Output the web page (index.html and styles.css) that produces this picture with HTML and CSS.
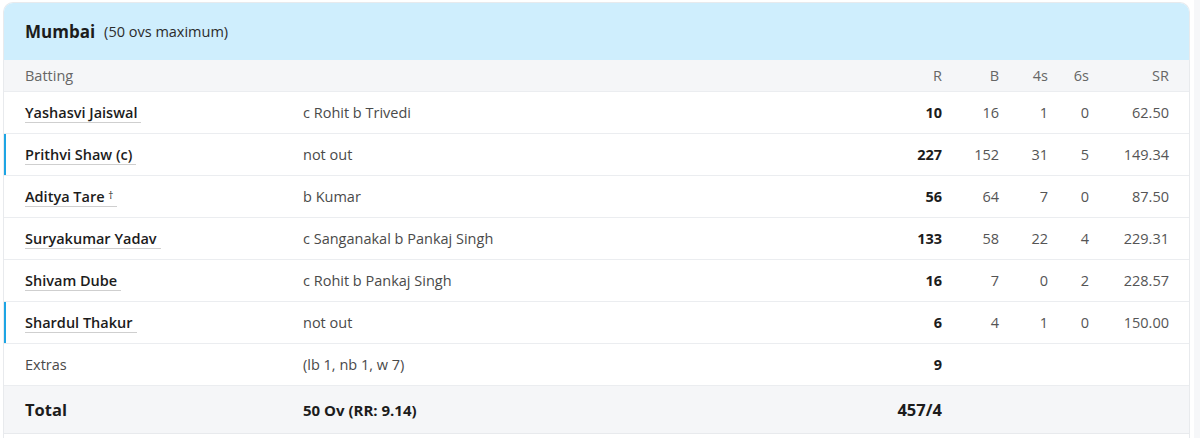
FILE: index.html
```html
<!DOCTYPE html>
<html lang="en">
<head>
    <meta charset="UTF-8">
    <meta name="viewport" content="width=device-width, initial-scale=1.0">
    <title>Mumbai - Batting</title>
    <link rel="stylesheet" href="styles.css">
</head>
<body>
    <div class="page">
        <div class="card">
            <div class="card-head">
                <span class="team">Mumbai</span>
                <span class="overs">(50 ovs maximum)</span>
            </div>

            <div class="row row-labels">
                <span>Batting</span>
                <span></span>
                <span class="num">R</span>
                <span class="num">B</span>
                <span class="num">4s</span>
                <span class="num">6s</span>
                <span class="num">SR</span>
            </div>

            <div class="row">
                <span class="name"><a href="#">Yashasvi Jaiswal</a></span>
                <span class="how">c Rohit b Trivedi</span>
                <span class="num runs">10</span>
                <span class="num">16</span>
                <span class="num">1</span>
                <span class="num">0</span>
                <span class="num">62.50</span>
            </div>

            <div class="row notout">
                <span class="name"><a href="#">Prithvi Shaw (c)</a></span>
                <span class="how">not out</span>
                <span class="num runs">227</span>
                <span class="num">152</span>
                <span class="num">31</span>
                <span class="num">5</span>
                <span class="num">149.34</span>
            </div>

            <div class="row">
                <span class="name"><a href="#">Aditya Tare <small>†</small></a></span>
                <span class="how">b Kumar</span>
                <span class="num runs">56</span>
                <span class="num">64</span>
                <span class="num">7</span>
                <span class="num">0</span>
                <span class="num">87.50</span>
            </div>

            <div class="row">
                <span class="name"><a href="#">Suryakumar Yadav</a></span>
                <span class="how">c Sanganakal b Pankaj Singh</span>
                <span class="num runs">133</span>
                <span class="num">58</span>
                <span class="num">22</span>
                <span class="num">4</span>
                <span class="num">229.31</span>
            </div>

            <div class="row">
                <span class="name"><a href="#">Shivam Dube</a></span>
                <span class="how">c Rohit b Pankaj Singh</span>
                <span class="num runs">16</span>
                <span class="num">7</span>
                <span class="num">0</span>
                <span class="num">2</span>
                <span class="num">228.57</span>
            </div>

            <div class="row notout">
                <span class="name"><a href="#">Shardul Thakur</a></span>
                <span class="how">not out</span>
                <span class="num runs">6</span>
                <span class="num">4</span>
                <span class="num">1</span>
                <span class="num">0</span>
                <span class="num">150.00</span>
            </div>

            <div class="row row-extras">
                <span>Extras</span>
                <span class="how">(lb 1, nb 1, w 7)</span>
                <span class="num runs">9</span>
                <span></span>
                <span></span>
                <span></span>
                <span></span>
            </div>

            <div class="row row-total">
                <span class="total-label">Total</span>
                <span class="total-overs">50 Ov (RR: 9.14)</span>
                <span class="num total-runs">457/4</span>
                <span></span>
                <span></span>
                <span></span>
                <span></span>
            </div>
        </div>
        <div class="side"></div>
    </div>
</body>
</html>
```

FILE: styles.css
```css
body {
    margin: 0;
    background-color: #ffffff;
    font-family: 'Open Sans', 'Noto Sans', sans-serif;
    font-size: 14.5px;
    color: #1e1e1e;
}
.page {
    display: flex;
    height: 438px;
    overflow: hidden;
}
.card {
    width: 1185px;
    margin: 2px 0 0 3px;
    border: 1px solid #e8eaed;
    border-bottom: none;
    border-radius: 10px 10px 0 0;
    overflow: hidden;
}
.side {
    flex: 1;
    margin-left: 4px;
    background-color: #f6f7f9;
}
.card-head {
    height: 57px;
    display: flex;
    align-items: center;
    gap: 9px;
    padding-left: 21px;
    background-color: #cfeefd;
}
.team {
    font-size: 17px;
    font-weight: 700;
    color: #1c1c1c;
}
.overs {
    font-size: 14.5px;
    color: #2b2b2b;
}
.row {
    display: grid;
    grid-template-columns: 278px 1fr 60px 57px 49px 41px 80px;
    align-items: center;
    height: 41px;
    padding: 0 20px 0 21px;
    border-top: 1px solid #ebedf0;
    position: relative;
    color: #555;
}
.row-labels {
    height: 31px;
    border-top: none;
    background-color: #f5f6f8;
    color: #666;
}
.num {
    text-align: right;
}
.runs {
    font-weight: 700;
    color: #1c1c1c;
}
.name a {
    color: #1c1c1c;
    font-weight: 600;
    text-decoration: none;
    padding-right: 4px;
    border-bottom: 1px solid #cfcfcf;
}
.name small {
    font-size: 10px;
    font-weight: 400;
    vertical-align: 3px;
}
.how {
    color: #4a4a4a;
}
.notout::before {
    content: "";
    position: absolute;
    left: -1px;
    top: 0;
    bottom: 0;
    width: 3px;
    background-color: #1ea5e4;
}
.row-extras {
    color: #4a4a4a;
}
.row-total {
    height: 47px;
    background-color: #f5f6f8;
    border-bottom: 1px solid #e8eaed;
    color: #1c1c1c;
}
.total-label {
    font-size: 16.5px;
    font-weight: 700;
}
.total-overs {
    font-size: 15px;
    font-weight: 700;
}
.total-runs {
    font-size: 16.5px;
    font-weight: 700;
}
```
